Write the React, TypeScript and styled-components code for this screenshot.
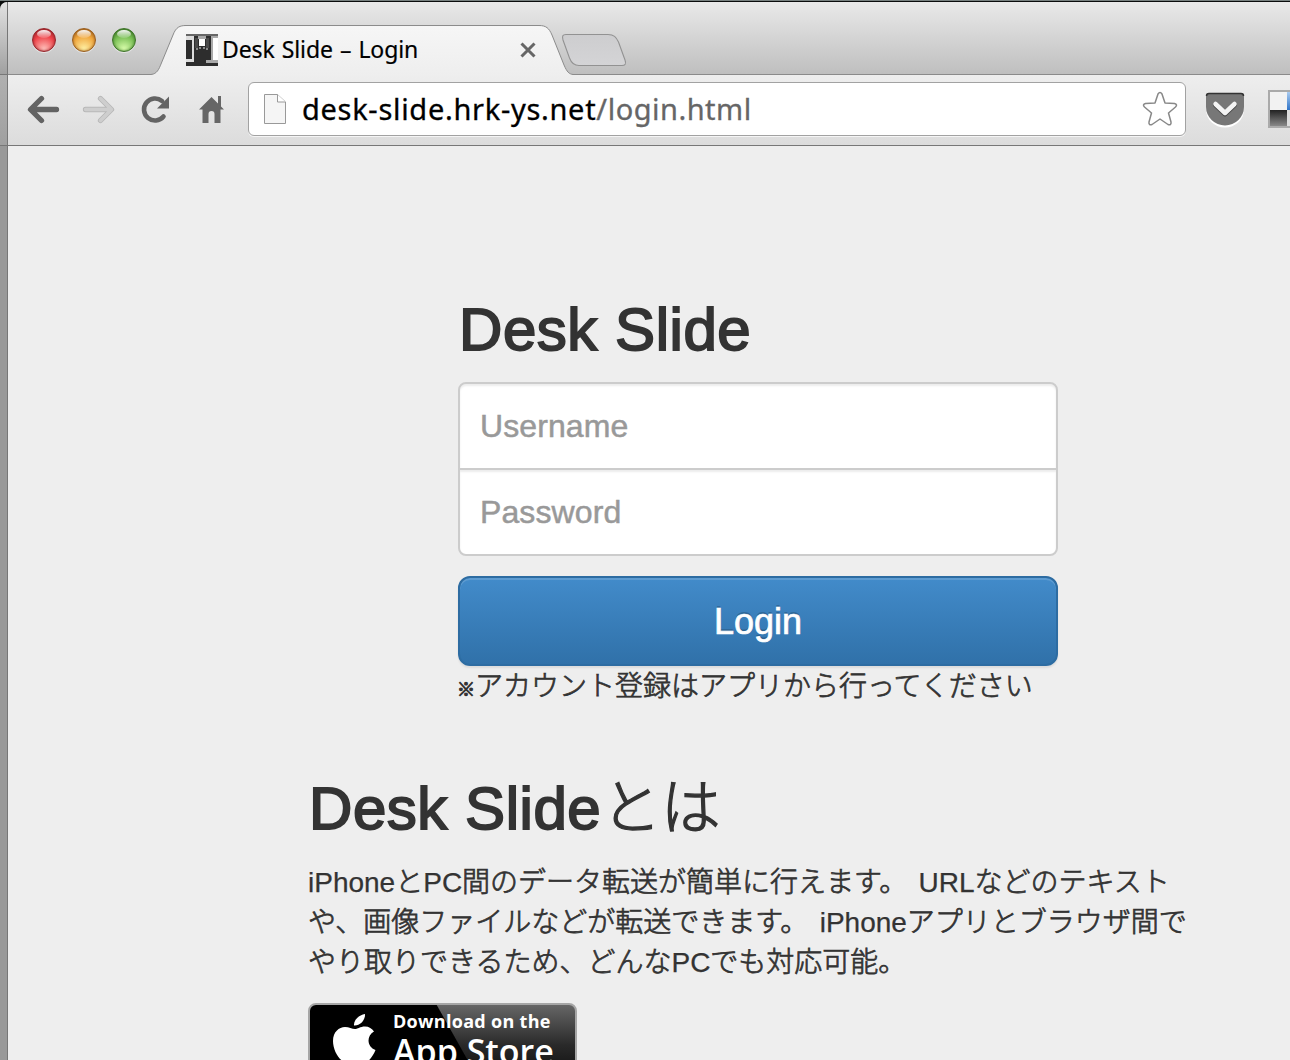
import React from "react";
import styled, { createGlobalStyle } from "styled-components";

const Global = createGlobalStyle`
  * { box-sizing: border-box; }
  html, body { margin: 0; height: 100%; overflow: hidden; background: #ededed; }
`;

const sans = `"Liberation Sans", "Noto Sans CJK JP", sans-serif`;
const ui = `"Noto Sans", "Open Sans", sans-serif`;

const Desktop = styled.div`
  display: flex;
  width: 1290px;
  height: 1060px;
  overflow: hidden;
  border-top: 1px solid #77807f;
  background: #0a0c0c;
  padding-top: 1px;
  font-family: ${sans};
  color: #333;
`;

const Edge = styled.div`
  display: flex;
  flex-direction: column;
  flex: 0 0 8px;
  border-right: 1px solid #777;
  border-top-left-radius: 8px;
  overflow: hidden;
  background: #999;
`;

const EdgePart = styled.div<{ $h: number; $from: string; $to: string }>`
  flex: 0 0 ${(p) => p.$h}px;
  border-bottom: 1px solid #777;
  background: linear-gradient(${(p) => p.$from}, ${(p) => p.$to});
`;

const Window = styled.div`
  flex: 1;
  min-width: 0;
  display: flex;
  flex-direction: column;
  background: #eee;
`;

const TabStrip = styled.div`
  position: relative;
  display: flex;
  flex: 0 0 73px;
  background: linear-gradient(#e9e9e9, #d6d6d6 45%, #bfbfbf);
  border-bottom: 1px solid #8b8b8b;
`;

const TabShapes = styled.svg`
  position: absolute;
  left: 0;
  top: 0;
`;

const Lights = styled.div`
  display: flex;
  gap: 16px;
  padding: 26px 0 0 24px;
  width: 178px;
`;

const Light = styled.span<{ $rim: string; $mid: string; $glow: string }>`
  position: relative;
  width: 24px;
  height: 24px;
  border-radius: 50%;
  border: 1px solid ${(p) => p.$rim};
  background: radial-gradient(circle at 50% 92%, ${(p) => p.$glow} 0, ${(p) => p.$mid} 58%, ${(p) => p.$rim} 100%);
  box-shadow: inset 0 0 3px ${(p) => p.$rim}, 0 1px 0 rgba(255, 255, 255, 0.5);
  &::after {
    content: "";
    position: absolute;
    left: 4px;
    top: 1px;
    width: 14px;
    height: 8px;
    border-radius: 50%;
    background: linear-gradient(rgba(255, 255, 255, 0.95), rgba(255, 255, 255, 0.15));
  }
`;

const Tab = styled.div`
  position: relative;
  display: flex;
  align-items: center;
  width: 352px;
  height: 48px;
  margin-top: 24px;
`;

const TabTitle = styled.span`
  flex: 1;
  margin: -2px 0 0 4px;
  font: 400 23px/30px ${ui};
  letter-spacing: -0.1px;
  word-spacing: 1.2px;
  white-space: nowrap;
  color: #000;
  -webkit-text-stroke: 0.2px #000;
`;

const Toolbar = styled.div`
  display: flex;
  align-items: center;
  flex: 0 0 71px;
  background: linear-gradient(#eee, #dcdcdc);
  border-bottom: 1px solid #777;
`;

const NavIcons = styled.div`
  flex: 0 0 240px;
  height: 70px;
`;

const Omnibox = styled.div`
  display: flex;
  align-items: center;
  flex: 0 0 938px;
  height: 54px;
  margin-top: -2px;
  padding: 0 7px 0 14px;
  border: 1px solid #a2a2a2;
  border-radius: 6px;
  background: #fff;
  box-shadow: 0 1px 0 rgba(255, 255, 255, 0.7);
`;

const Url = styled.span`
  flex: 1;
  margin-left: 15px;
  font: 400 29px/40px ${ui};
  letter-spacing: 0.5px;
  white-space: nowrap;
  color: #666;
  -webkit-text-stroke: 0.3px currentColor;
  b { font-weight: 400; color: #000; letter-spacing: 0.7px; }
`;

const Extensions = styled.div`
  flex: 0 0 104px;
  height: 70px;
`;

const Page = styled.main`
  flex: 1;
  padding: 151px 0 0 300px;
  overflow: hidden;
`;

const Content = styled.div`
  width: 900px;
  display: flex;
  flex-direction: column;
`;

const Form = styled.form`
  display: flex;
  flex-direction: column;
  width: 600px;
  align-self: center;
`;

const Heading = styled.h2`
  margin: 0;
  padding-left: 1px;
  font-weight: 300;
  font-size: 60px;
  line-height: 66px;
  letter-spacing: -0.6px;
  white-space: nowrap;
  -webkit-text-stroke: 1.3px #333;
  span { letter-spacing: 0.55px; -webkit-text-stroke: 1.9px #333; }
`;

const Field = styled.input<{ $last?: boolean }>`
  height: 88px;
  margin: ${(p) => (p.$last ? "-2px 0 0" : "19px 0 0")};
  padding: 1px 20px 0;
  border: 2px solid #ccc;
  border-radius: ${(p) => (p.$last ? "0 0 8px 8px" : "8px 8px 0 0")};
  background: #fff;
  box-shadow: inset 0 2px 2px rgba(0, 0, 0, 0.075);
  font: 400 32px ${sans};
  letter-spacing: 0.1px;
  outline: none;
  &::placeholder { color: #999; opacity: 1; -webkit-text-stroke: 0.5px #999; }
`;

const LoginButton = styled.button`
  height: 90px;
  margin-top: 20px;
  padding: 2px 0 0;
  border: 2px solid #2d6ca2;
  border-radius: 12px;
  background: linear-gradient(#428bca, #3071a9);
  box-shadow: inset 0 2px 0 rgba(255, 255, 255, 0.15), 0 2px 2px rgba(0, 0, 0, 0.075);
  color: #fff;
  font: 400 36px ${sans};
  text-shadow: 0 -2px 0 rgba(0, 0, 0, 0.2);
  -webkit-text-stroke: 0.7px #fff;
`;

const Text = styled.p<{ $top: number }>`
  margin: ${(p) => p.$top}px 0 0;
  font-size: 28px;
  font-weight: 300;
  line-height: 40px;
  word-spacing: 3.5px;
  -webkit-text-stroke: 0.75px #333;
`;

const Latin = styled.span`
  -webkit-text-stroke: 0.25px #333;
`;

const Line = styled.span`
  display: block;
  white-space: nowrap;
`;

const Mark = styled.small`
  display: inline-block;
  width: 17px;
  font-size: 18px;
  line-height: 20px;
  text-indent: -1px;
  -webkit-text-stroke: 1.1px #333;
`;

const About = styled.section`
  display: flex;
  flex-direction: column;
  margin-top: 69px;
`;

const Badge = styled.a`
  display: flex;
  width: 269px;
  height: 92px;
  margin: 20px 0 0;
  padding: 6px 0 0 23px;
  border: 2px solid #a6a6a6;
  border-radius: 8px;
  background:
    linear-gradient(60.7deg, #000 0 calc(50% + 16px), transparent calc(50% + 17px)),
    linear-gradient(#666, #2a2a2a 45%, #000);
  color: #fff;
`;

const BadgeText = styled.div`
  display: flex;
  flex-direction: column;
  margin-left: 16px;
  font-family: "Open Sans", sans-serif;
  white-space: nowrap;
`;

const BadgeSmall = styled.span`
  font-size: 18px;
  font-weight: 700;
  line-height: 20px;
  letter-spacing: 0.3px;
`;

const BadgeBig = styled.span`
  font-size: 34px;
  font-weight: 600;
  line-height: 40px;
`;

function Favicon() {
  return (
    <svg width="32" height="32" viewBox="0 0 32 32" shapeRendering="crispEdges">
      <path fill="#2d2d2d" d="M0 0h32v32H0z" />
      <path fill="#666" d="M0 0h32v2H0z" />
      <path fill="#ddd" d="M0 2h8v26H0v-3h6V6H0z" />
      <path fill="#aaa" d="M25 2h7v2h-5v22h-2zM20 26h12v3H20z" />
      <path fill="#fff" d="M27 4h5v22h-5zM13 4h6v8h-6z" />
      <path fill="#aaa" d="M12 2h8v3h-8z" />
      <path fill="#4a4a4a" d="M9 4h3v10H9zM20 4h3v10h-3z" />
      <path fill="#888" d="M10 14h2v2h-2zM13 13h2v2h-2zM17 13h2v2h-2zM20 14h2v2h-2z" />
    </svg>
  );
}

export default function App() {
  return (
    <>
      <Global />
      <Desktop>
        <Edge>
          <EdgePart $h={73} $from="#e2e2e2" $to="#a0a0a0" />
          <EdgePart $h={71} $from="#b0b0b0" $to="#a0a0a0" />
        </Edge>
        <Window>
          <TabStrip>
            <TabShapes width="1282" height="73" viewBox="8 2 1282 73">
              <defs>
                <linearGradient id="tab" x1="0" y1="0" x2="0" y2="1">
                  <stop offset="0" stopColor="#f6f6f6" />
                  <stop offset="1" stopColor="#eee" />
                </linearGradient>
                <linearGradient id="newtab" x1="0" y1="0" x2="0" y2="1">
                  <stop offset="0" stopColor="#cdcdcf" />
                  <stop offset="1" stopColor="#d4d4d6" />
                </linearGradient>
              </defs>
              <path d="M151 74.5C157 74 159 69 161 64L173 35C176 27 180 25.500 186 25.500H539C546 25.500 549 28 552 35L564 65C567 72 569 74 573 74.500V76H151z" fill="url(#tab)" />
              <path d="M151 74.500C157 74 159 69 161 64L173 35C176 27 180 25.500 186 25.500H539C546 25.500 549 28 552 35L564 65C567 72 569 74 573 74.500" fill="none" stroke="#8b8b8b" />
              <path d="M566 34.500H608C614 34.500 616 37 618.500 42L625 60C626.500 64 625 65.500 622 65.500H579C574 65.500 571 62 569.500 58L563 40C562 36 562.500 34.500 566 34.500z" fill="url(#newtab)" stroke="#929292" strokeWidth="1.100" />
            </TabShapes>
            <Lights>
              <Light $rim="#96242a" $mid="#ee4248" $glow="#ffc3bd" />
              <Light $rim="#9a5d1c" $mid="#f0a63c" $glow="#fff2a6" />
              <Light $rim="#3c7327" $mid="#76bd52" $glow="#dcffae" />
            </Lights>
            <Tab>
              <Favicon />
              <TabTitle>Desk Slide – Login</TabTitle>
              <svg width="20" height="20" viewBox="0 0 20 20" stroke="#666" strokeWidth="3">
                <path d="M3.500 3.500l13 13M16.500 3.500l-13 13" />
              </svg>
            </Tab>
          </TabStrip>
          <Toolbar>
            <NavIcons>
              <svg width="240" height="70" viewBox="8 75 240 70" fill="none">
                <path d="M56.500 109.500H32M41.500 98.500L30.500 109.500L41.500 120.500" stroke="#636363" strokeWidth="5.300" strokeLinecap="round" strokeLinejoin="round" />
                <path d="M85.500 109.500H110M100.500 98.500L111.500 109.500L100.500 120.500" stroke="#b8b8b8" strokeWidth="5.300" strokeLinecap="round" strokeLinejoin="round" />
                <path d="M85.500 109.500H110M100.500 98.500L111.500 109.500L100.500 120.500" stroke="#cecece" strokeWidth="3.500" strokeLinecap="round" strokeLinejoin="round" />
                <path d="M163.500 116.500A11 11 0 1 1 162 101" stroke="#636363" strokeWidth="4.600" strokeLinecap="round" />
                <path d="M169 96.500V108.500H157z" fill="#636363" />
                <path d="M211.500 97L199 109.500H202.500V123H208.500V114Q208.500 111 211.500 111Q214.500 111 214.500 114V123H220.500V109.500H224L221 106.500V96H218V103.500z" fill="#666" />
              </svg>
            </NavIcons>
            <Omnibox>
              <svg width="24" height="34" viewBox="0 0 24 34">
                <path d="M1.500 2.500H14.500L22.500 10V31.500H1.500z" fill="#f5f5f5" stroke="#999" />
                <path d="M14.500 2.500V10H22.500" fill="#fff" stroke="#999" />
              </svg>
              <Url><b>desk-slide.hrk-ys.net</b>/login.html</Url>
              <svg width="36" height="36" viewBox="0 0 36 36">
                <path d="M16 3Q18 0 20 3L23 12L32.500 12.500Q36 13.500 33.500 16L26.500 22L29 31Q29.500 34.500 26 33.500L18 28L10 33.500Q6.500 34.500 7 31L9.500 22L2.500 16Q0 13.500 3.500 12.500L13 12z" fill="#fff" stroke="#888" strokeWidth="1.500" strokeLinejoin="round" />
              </svg>
            </Omnibox>
            <Extensions>
              <svg width="104" height="70" viewBox="1186 75 104 70">
                <defs>
                  <linearGradient id="tile" x1="0" y1="0" x2="0" y2="1">
                    <stop offset="0" stopColor="#222" />
                    <stop offset="1" stopColor="#888" />
                  </linearGradient>
                  <linearGradient id="blue" x1="0" y1="0" x2="0" y2="1">
                    <stop offset="0" stopColor="#a9cbf0" />
                    <stop offset="1" stopColor="#2f74c8" />
                  </linearGradient>
                </defs>
                <path d="M1206 97V108A19 18 0 0 0 1244 108V97z" fill="#fff" transform="translate(0 1.500)" />
                <path d="M1206 96Q1206 93 1209 93H1241Q1244 93 1244 96V107A19 18.500 0 0 1 1206 107z" fill="#777" />
                <path d="M1206.500 96Q1206.500 93.500 1209 93.500H1241Q1243.500 93.500 1243.500 96" stroke="#333" fill="none" strokeWidth="1.500" />
                <path d="M1215.500 105L1225 114L1234.500 105" stroke="#444" fill="none" strokeWidth="5" strokeLinecap="round" strokeLinejoin="round" />
                <path d="M1215.500 104L1225 113L1234.500 104" stroke="#f4f4f4" fill="none" strokeWidth="4.500" strokeLinecap="round" strokeLinejoin="round" />
                <path d="M1268 90H1290V128H1268z" fill="#aaa" />
                <path d="M1270 92H1287V110H1270z" fill="#f2f2f2" />
                <path d="M1287 92H1290V110H1287z" fill="url(#blue)" />
                <path d="M1270 110H1287V126H1270z" fill="url(#tile)" />
                <path d="M1287 110H1290V126H1287z" fill="#ddd" />
              </svg>
            </Extensions>
          </Toolbar>
          <Page>
            <Content>
              <Form>
                <Heading><span>Desk Slide</span></Heading>
                <Field placeholder="Username" />
                <Field $last type="password" placeholder="Password" />
                <LoginButton type="button">Login</LoginButton>
                <Text $top={1}><Line><Mark>※</Mark>アカウント登録はアプリから行ってください</Line></Text>
              </Form>
              <About>
                <Heading><span>Desk Slide</span>とは</Heading>
                <Text $top={21}>
                  <Line><Latin>iPhone</Latin>と<Latin>PC</Latin>間のデータ転送が簡単に行えます。 <Latin>URL</Latin>などのテキスト</Line>
                  <Line>や、画像ファイルなどが転送できます。 <Latin>iPhone</Latin>アプリとブラウザ間で</Line>
                  <Line>やり取りできるため、どんな<Latin>PC</Latin>でも対応可能。</Line>
                </Text>
                <Badge>
                  <svg width="44" height="52" viewBox="0 0 44 52" fill="#fff">
                    <path d="M32 3C32.500 9 27 15 21 14.500C20.500 9 26 4 32 3z" />
                    <path d="M22 18C25 18 27 15.500 32 15.500C36 15.500 39 17.500 41 20.500C33 25 34 36 42.500 39C40 45 36 51 32 51C28 51 27 49 22.500 49C18 49 16 51 13 51C7 51 0 40 0 30C0 21 6 16 12 16C16 16 19 18 22 18z" />
                  </svg>
                  <BadgeText>
                    <BadgeSmall>Download on the</BadgeSmall>
                    <BadgeBig>App Store</BadgeBig>
                  </BadgeText>
                </Badge>
              </About>
            </Content>
          </Page>
        </Window>
      </Desktop>
    </>
  );
}
